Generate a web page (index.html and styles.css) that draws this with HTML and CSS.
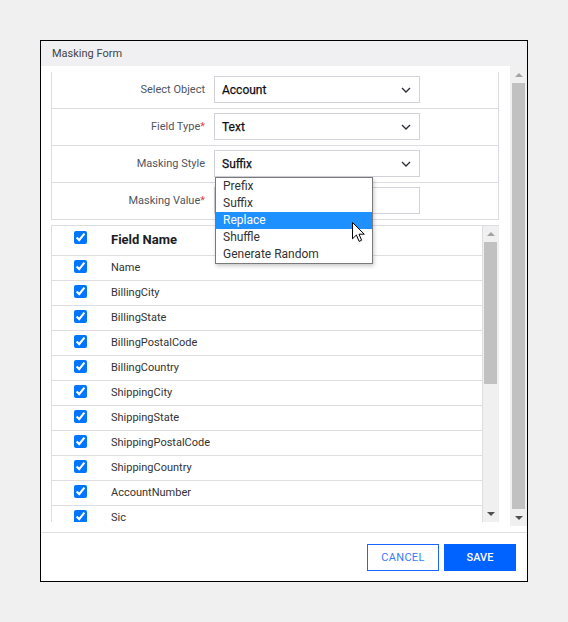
FILE: index.html
```html
<!DOCTYPE html>
<html>
<head>
<meta charset="utf-8">
<link rel="stylesheet" href="styles.css">
</head>
<body>
<div class="dialog">
  <div class="dlg-header">Masking Form</div>
  <div class="dlg-body">
    <div class="scroll-area">
      <div class="scroll-content">
        <div class="form-panel">
          <div class="form-row">
            <div class="form-label">Select Object</div>
            <div class="select"><span>Account</span><svg class="chev" width="10" height="6" viewBox="0 0 10 6"><path d="M1 1 L5 5 L9 1" fill="none" stroke="#2b2b33" stroke-width="1.3"/></svg></div>
          </div>
          <div class="form-row">
            <div class="form-label">Field Type<span class="req">*</span></div>
            <div class="select"><span>Text</span><svg class="chev" width="10" height="6" viewBox="0 0 10 6"><path d="M1 1 L5 5 L9 1" fill="none" stroke="#2b2b33" stroke-width="1.3"/></svg></div>
          </div>
          <div class="form-row">
            <div class="form-label">Masking Style</div>
            <div class="select"><span>Suffix</span><svg class="chev" width="10" height="6" viewBox="0 0 10 6"><path d="M1 1 L5 5 L9 1" fill="none" stroke="#2b2b33" stroke-width="1.3"/></svg></div>
          </div>
          <div class="form-row">
            <div class="form-label">Masking Value<span class="req">*</span></div>
            <div class="input"></div>
          </div>
          <ul class="dropdown">
            <li>Prefix</li>
            <li>Suffix</li>
            <li class="active">Replace</li>
            <li>Shuffle</li>
            <li>Generate Random</li>
          </ul>
          <svg class="cursor" width="14" height="21" viewBox="0 0 14 21"><path d="M0.5 0.5 V16.8 L4.4 13 L7.1 19.4 L9.6 18.3 L7 12.2 H12.3 Z" fill="#fff" stroke="#000" stroke-width="1" stroke-linejoin="miter"/></svg>
        </div>
        <div class="table-panel">
          <div class="table-rows">
            <div class="t-row t-head"><div class="cb-cell"><input type="checkbox" checked></div><div class="name-cell">Field Name</div></div>
            <div class="t-row"><div class="cb-cell"><input type="checkbox" checked></div><div class="name-cell">Name</div></div>
            <div class="t-row"><div class="cb-cell"><input type="checkbox" checked></div><div class="name-cell">BillingCity</div></div>
            <div class="t-row"><div class="cb-cell"><input type="checkbox" checked></div><div class="name-cell">BillingState</div></div>
            <div class="t-row"><div class="cb-cell"><input type="checkbox" checked></div><div class="name-cell">BillingPostalCode</div></div>
            <div class="t-row"><div class="cb-cell"><input type="checkbox" checked></div><div class="name-cell">BillingCountry</div></div>
            <div class="t-row"><div class="cb-cell"><input type="checkbox" checked></div><div class="name-cell">ShippingCity</div></div>
            <div class="t-row"><div class="cb-cell"><input type="checkbox" checked></div><div class="name-cell">ShippingState</div></div>
            <div class="t-row"><div class="cb-cell"><input type="checkbox" checked></div><div class="name-cell">ShippingPostalCode</div></div>
            <div class="t-row"><div class="cb-cell"><input type="checkbox" checked></div><div class="name-cell">ShippingCountry</div></div>
            <div class="t-row"><div class="cb-cell"><input type="checkbox" checked></div><div class="name-cell">AccountNumber</div></div>
            <div class="t-row"><div class="cb-cell"><input type="checkbox" checked></div><div class="name-cell">Sic</div></div>
          </div>
          <div class="vscroll small">
            <div class="sb-btn"><span class="tri up"></span></div>
            <div class="sb-track"><div class="sb-thumb"></div></div>
            <div class="sb-btn"><span class="tri down"></span></div>
          </div>
        </div>
      </div>
      <div class="vscroll big">
        <div class="sb-btn"><span class="tri up"></span></div>
        <div class="sb-track"><div class="sb-thumb"></div></div>
        <div class="sb-btn"><span class="tri down"></span></div>
      </div>
    </div>
  </div>
  <div class="dlg-footer">
    <button class="btn btn-outline">CANCEL</button>
    <button class="btn btn-primary">SAVE</button>
  </div>
</div>
</body>
</html>
```

FILE: styles.css
```css
* { box-sizing: border-box; }

body {
  margin: 0;
  background: #f0f0f0;
  font-family: Roboto, "Liberation Sans", sans-serif;
}

.dialog {
  margin: 40px 0 0 40px;
  width: 488px;
  height: 542px;
  border: 1px solid #000;
  background: #fff;
  display: flex;
  flex-direction: column;
}

.dlg-header {
  flex: none;
  height: 25px;
  background: #f0f0f2;
  padding-left: 11px;
  font-size: 11px;
  line-height: 25px;
  color: #444;
}

.dlg-body {
  flex: none;
  height: 466px;
}

.scroll-area {
  height: 460px;
  display: flex;
}

.scroll-content {
  flex: 1;
  min-width: 0;
  overflow: hidden;
  padding: 6px 11px 0 10px;
}

/* form panel */
.form-panel {
  position: relative;
  width: 448px;
  border-left: 1px solid #dcdce2;
  border-right: 1px solid #dcdce2;
}

.form-row {
  display: flex;
  align-items: center;
  height: 37px;
  border-bottom: 1px solid #dcdce2;
  padding-bottom: 1px;
}

.form-label {
  width: 153px;
  text-align: right;
  font-size: 11px;
  color: #4f5561;
  margin-right: 9px;
}

.req { color: #e0474c; }

.select, .input {
  width: 206px;
  height: 27px;
  border: 1px solid #d2d2da;
  display: flex;
  align-items: center;
  justify-content: space-between;
  padding: 0 8px 0 7px;
  font-size: 12px;
  font-weight: 400;
  color: #0e0f14;
  -webkit-text-stroke: 0.25px #0e0f14;
}

.chev { display: block; }

/* dropdown overlay */
.dropdown {
  position: absolute;
  left: 163px;
  top: 105px;
  width: 158px;
  height: 87px;
  margin: 0;
  padding: 0;
  list-style: none;
  background: #fff;
  border: 1px solid #7a7a7a;
  box-shadow: 1px 2px 4px rgba(0, 0, 0, 0.22);
}

.dropdown li {
  height: 17px;
  line-height: 17px;
  padding-left: 7px;
  font-size: 12px;
  color: #333;
}

.dropdown li.active {
  background: #1e90ff;
  color: #fff;
}

.cursor {
  position: absolute;
  left: 300px;
  top: 150px;
}

/* table panel */
.table-panel {
  margin-top: 5px;
  width: 448px;
  height: 297px;
  overflow: hidden;
  display: flex;
  border-top: 1px solid #dedee2;
  border-left: 1px solid #dedee2;
  border-right: 1px solid #eeeeee;
}

.table-rows {
  flex: 1;
  min-width: 0;
  border-right: 1px solid #dedee2;
}

.t-row {
  display: flex;
  align-items: center;
  height: 25px;
  border-bottom: 1px solid #dedee2;
  padding-bottom: 1px;
}

.t-head {
  height: 30px;
  padding-bottom: 3px;
}

.cb-cell {
  width: 59px;
  padding-left: 22px;
  display: flex;
  align-items: center;
}

.cb-cell input {
  margin: 0 0 3px 0;
  width: 13px;
  height: 13px;
  accent-color: #0075ff;
}

.name-cell {
  font-size: 11px;
  color: #333;
}

.t-head .name-cell {
  font-size: 13px;
  font-weight: 700;
  color: #1d1d26;
}

/* scrollbars */
.vscroll {
  flex: none;
  display: flex;
  flex-direction: column;
  background: #f0f0f0;
}

.vscroll.big { width: 17px; }
.vscroll.small { width: 15px; }

.sb-btn {
  flex: none;
  height: 17px;
  display: flex;
  align-items: center;
  justify-content: center;
}

.small .sb-btn { height: 16px; }

.sb-track {
  flex: 1;
  padding: 0 2px;
}

.small .sb-track { padding: 0 1px; }

.big .sb-thumb { height: 100%; background: #c1c1c1; }

.small .sb-thumb { height: 142px; background: #c1c1c1; }

.tri {
  width: 0;
  height: 0;
  border-left: 4px solid transparent;
  border-right: 4px solid transparent;
}

.tri.up { border-bottom: 4px solid #a3a3a3; }
.tri.down { border-top: 4px solid #505050; }

/* footer */
.dlg-footer {
  flex: 1;
  border-top: 1px solid #e0e0e0;
  display: flex;
  justify-content: flex-end;
  align-items: flex-start;
  gap: 5px;
  padding: 11px 11px 0 0;
}

.btn {
  width: 72px;
  height: 27px;
  margin: 0;
  padding: 0;
  font-family: Roboto, "Liberation Sans", sans-serif;
  font-size: 11px;
  cursor: pointer;
}

.btn-outline {
  background: #fff;
  border: 1px solid #1a66ff;
  color: #3b7bff;
  letter-spacing: 0.3px;
}

.btn-primary {
  background: #0062ff;
  border: 1px solid #0062ff;
  color: #fff;
  font-weight: 500;
}
```
